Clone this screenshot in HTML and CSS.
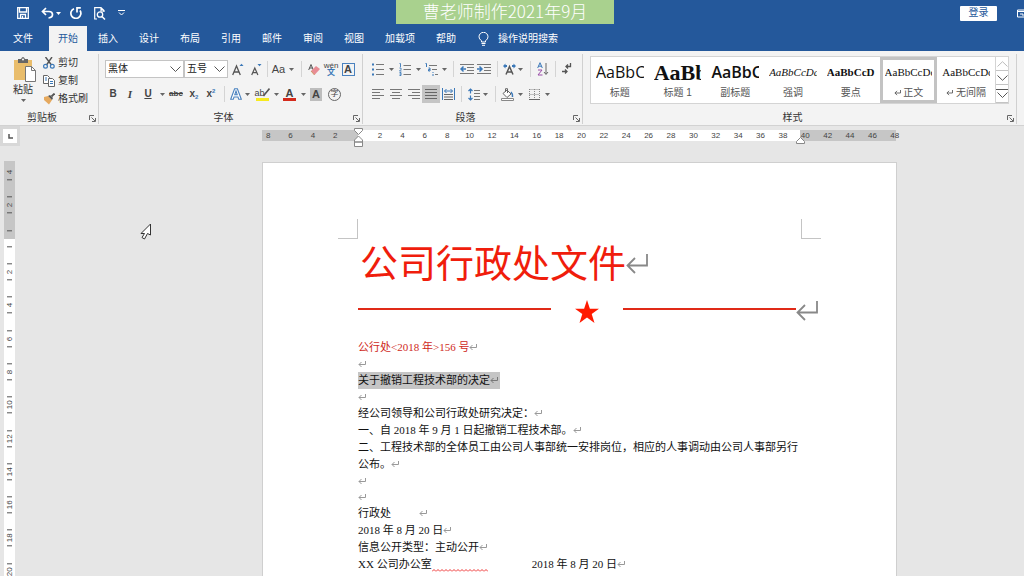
FILE: index.html
```html
<!DOCTYPE html>
<html lang="zh-CN">
<head>
<meta charset="utf-8">
<title>公司行政处文件</title>
<link rel="stylesheet" href="styles.css">
</head>
<body>
<svg class="defs" aria-hidden="true">
  <symbol id="caret" viewBox="0 0 5 3"><path d="M0 0h5L2.500 3z" fill="#666"/></symbol>
  <symbol id="ret" viewBox="0 0 22 20"><path d="M21 0v11.500H2M9 4L1.500 11.500L9 19" fill="none" stroke="currentColor" stroke-width="1.800"/></symbol>
  <symbol id="ret-small" viewBox="0 0 8 7"><path d="M7.500 0v3.500H1M3.500 1L1 3.500L3.500 6" fill="none" stroke="currentColor"/></symbol>
  <symbol id="launch" viewBox="0 0 7 7"><path d="M.5 5V.5H5M2.500 2.500L6 6M6.500 3v3.500H3" fill="none" stroke="#666"/></symbol>
</svg>

<header class="titlebar">
  <div class="quick">
    <button aria-label="保存"><svg width="12" height="12" viewBox="0 0 12 12"><path d="M.7.7h10.600v10.600H.7zM2.500 1v4h7V1M3.500 11V7.500h5V11M5.500 11V9" fill="none" stroke="#fff" stroke-width="1.300"/></svg></button>
    <button aria-label="撤消"><svg width="20" height="12" viewBox="0 0 20 12"><path d="M5 1L1.500 4.500L5 8M2 4.500h6q3.500 0 3.500 3t-4 3.500" fill="none" stroke="#fff" stroke-width="1.700"/><path d="M15 5h5l-2.500 3z" fill="#fff"/></svg></button>
    <button aria-label="重复"><svg width="12" height="12" viewBox="0 0 12 12"><path d="M4 1.700A5 5 0 1 0 10 3.500M10.800 .8H7v4.700" fill="none" stroke="#fff" stroke-width="1.700"/></svg></button>
    <button aria-label="打印预览"><svg width="12" height="13" viewBox="0 0 12 13"><path d="M3 12H.7V.7H7L10 3.500V5M7 .7V4h3" fill="none" stroke="#fff" stroke-width="1.200"/><circle cx="6" cy="7.500" r="2.700" fill="none" stroke="#fff" stroke-width="1.300"/><path d="M8 9.500l3 3" stroke="#fff" stroke-width="1.500"/></svg></button>
    <button aria-label="自定义快速访问工具栏"><svg width="7" height="6" viewBox="0 0 7 6"><path d="M0 .5h7M1 2.500l2.500 2.500L6 2.500" fill="none" stroke="#fff"/></svg></button>
  </div>
  <div class="watermark">曹老师制作2021年9月</div>
  <div class="account">
    <button class="login">登录</button>
    <svg width="7" height="9" viewBox="0 0 7 9"><path d="M8 1H.5v7H8M1 2.500h7M3 5h3v2" fill="none" stroke="#fff"/></svg>
  </div>
</header>

<nav class="tabs">
  <button>文件</button><button class="active">开始</button><button>插入</button><button>设计</button><button>布局</button><button>引用</button><button>邮件</button><button>审阅</button><button>视图</button><button>加载项</button><button>帮助</button>
  <button class="tell"><svg width="11" height="14" viewBox="0 0 11 14"><path d="M3.500 10V8.800Q1 7 1 4.800A4.300 4.300 0 0 1 10 4.800Q10 7 7.500 8.800V10zM3.500 11.500h4M4 13.300h3" fill="none" stroke="#fff"/></svg>操作说明搜索</button>
</nav>

<section class="ribbon">
  <div class="group clipboard">
    <div class="clip-tools">
      <button class="paste"><svg width="23" height="25" viewBox="0 0 23 25"><path d="M1 3h18v20H1z" fill="#e9bd6c"/><path d="M5 2h3q2-4 4 0h3v4H5z" fill="#666"/><circle cx="10" cy="2.500" r="1" fill="#fff"/><path d="M12.500 9.500h6l4 4v11h-10z" fill="#fff" stroke="#777"/><path d="M18.500 9.500v4h4" fill="none" stroke="#777"/></svg><span>粘贴</span><svg class="caret"><use href="#caret"/></svg></button>
      <div class="clip-list">
        <button><svg width="12" height="12" viewBox="0 0 12 12"><path d="M2.500 0L8.500 8M9 0L3.500 8" stroke="#555" stroke-width="1.400"/><circle cx="2.500" cy="9.300" r="1.900" fill="none" stroke="#3b78b8" stroke-width="1.200"/><circle cx="9.300" cy="9.300" r="1.900" fill="none" stroke="#3b78b8" stroke-width="1.200"/></svg>剪切</button>
        <button><svg width="12" height="12" viewBox="0 0 12 12"><path d="M.5.5h4l2 2v6h-6z" fill="#fff" stroke="#666"/><path d="M5.500 3.500h4l2 2v6h-6z" fill="#fff" stroke="#666"/><path d="M2 3h2M2 5h2M7 6.500h3M7 8.500h3" stroke="#3b78b8"/></svg>复制</button>
        <button><svg width="12" height="12" viewBox="0 0 12 12"><path d="M1 4l4-1 4 4-3 4.500L1 7z" fill="#e5a95f"/><path d="M5 3l2-1 3 3-1 2z" fill="#555"/><path d="M8.500 3.500L11.500.5" stroke="#555" stroke-width="1.800"/></svg>格式刷</button>
      </div>
    </div>
    <div class="group-label">剪贴板<button class="launch" aria-label="剪贴板设置"><svg width="7" height="7"><use href="#launch"/></svg></button></div>
  </div>

  <div class="group font">
    <div class="row font-top">
      <select aria-label="字体"><option>黑体</option></select>
      <select aria-label="字号"><option>五号</option></select>
      <i></i>
      <button aria-label="增大字号"><svg width="12" height="13" viewBox="0 0 12 13"><path d="M.7 12L4.500 3L8.300 12M2 9h5" fill="none" stroke="#555" stroke-width="1.300"/><path d="M7.500 3h4L9.500 .7z" fill="#3b78b8"/></svg></button>
      <button aria-label="减小字号"><svg width="12" height="13" viewBox="0 0 12 13"><path d="M1.700 12L4.800 5L7.900 12M2.700 9.700h4" fill="none" stroke="#555" stroke-width="1.200"/><path d="M7.500 1h4L9.500 3.300z" fill="#3b78b8"/></svg></button>
      <hr>
      <button class="aa">Aa</button>
      <svg class="caret"><use href="#caret"/></svg>
      <hr>
      <button aria-label="清除格式"><svg width="12" height="13" viewBox="0 0 12 13"><path d="M.7 7L3 1.500L5.300 7M1.500 5h3" fill="none" stroke="#555"/><path d="M3 8l5-5 4 3-5.500 6z" fill="#e88c94"/><path d="M3 8l3.500 4" stroke="#c96"/></svg></button>
      <button class="pinyin"><span>wén</span><b>文</b></button>
      <button class="boxed">A</button>
    </div>
    <div class="row font-bottom">
      <button><b>B</b></button>
      <button class="ital">I</button>
      <button class="under">U</button>
      <svg class="caret"><use href="#caret"/></svg>
      <button class="strike">abc</button>
      <button class="script">x<sub>2</sub></button>
      <button class="script">x<sup>2</sup></button>
      <hr>
      <button aria-label="文本效果"><svg width="12" height="12" viewBox="0 0 12 12"><path d="M.7 11.300L4.600.7h2.800l3.900 10.600H8.700L8 9H4l-.7 2.300zM4.800 6.700h2.400L6 3z" fill="#fff" stroke="#4a82bf" stroke-width="1.100"/></svg></button>
      <svg class="caret"><use href="#caret"/></svg>
      <button class="mark yellow">ab<svg width="7" height="9" viewBox="0 0 7 9"><path d="M6.500 .5L2 6l-1.500 2" fill="none" stroke="#555" stroke-width="1.600"/></svg></button>
      <svg class="caret"><use href="#caret"/></svg>
      <button class="mark red">A</button>
      <svg class="caret"><use href="#caret"/></svg>
      <button class="shaded">A</button>
      <button class="ring">字</button>
    </div>
    <div class="group-label">字体<button class="launch" aria-label="字体设置"><svg width="7" height="7"><use href="#launch"/></svg></button></div>
  </div>

  <div class="group para">
    <div class="row para-top">
      <button aria-label="项目符号"><svg width="12" height="13" viewBox="0 0 12 13"><path d="M0 1.500h2M0 6.500h2M0 11.500h2" stroke="#3b78b8" stroke-width="2"/><path d="M4 1.500h8M4 6.500h8M4 11.500h8" stroke="#777"/></svg></button>
      <svg class="caret"><use href="#caret"/></svg>
      <button aria-label="编号"><svg width="12" height="13" viewBox="0 0 12 13"><path d="M.5.5h1V4M.5 5h1.500v1.500L.5 8H2.500M.5 9.500H2v3H.5M.5 11H2" fill="none" stroke="#3b78b8" stroke-width=".9"/><path d="M4.500 2.500h7.500M4.500 6.500h7.500M4.500 11.500h7.500" stroke="#777"/></svg></button>
      <svg class="caret"><use href="#caret"/></svg>
      <button aria-label="多级列表"><svg width="14" height="13" viewBox="0 0 14 13"><path d="M.5.5h1V4M3.500 5H5v3H3.500V6.500H5M8 9v1M8 11v2" fill="none" stroke="#3b78b8"/><path d="M4 2.500h8M7 6.500h5M10 11.500h3" stroke="#777"/></svg></button>
      <svg class="caret"><use href="#caret"/></svg>
      <hr>
      <button aria-label="减少缩进"><svg width="14" height="11" viewBox="0 0 14 11"><path d="M0 .5h14M7 3.500h7M7 6.500h7M0 9.500h14" stroke="#777"/><path d="M6 5H1M3.500 2.500L1 5l2.500 2.500" fill="none" stroke="#3b78b8" stroke-width="1.500"/></svg></button>
      <button aria-label="增加缩进"><svg width="14" height="11" viewBox="0 0 14 11"><path d="M0 .5h14M7 3.500h7M7 6.500h7M0 9.500h14" stroke="#777"/><path d="M0 5h5M2.500 2.500L5 5L2.500 7.500" fill="none" stroke="#3b78b8" stroke-width="1.500"/></svg></button>
      <hr>
      <button aria-label="中文版式"><svg width="13" height="12" viewBox="0 0 13 12"><path d="M3 11.500L6.500 3.500L10 11.500M4 9h5" fill="none" stroke="#555" stroke-width="1.500"/><path d="M0 3l2.500-2.500V2H4v2H2.500v1.500zM13 3L10.500.5V2H9v2h1.500v1.500z" fill="#3b78b8"/></svg></button>
      <svg class="caret"><use href="#caret"/></svg>
      <hr>
      <button aria-label="排序"><svg width="12" height="14" viewBox="0 0 12 14"><path d="M.7 6L3 .7L5.300 6M1.500 4.200h3" fill="none" stroke="#3b78b8"/><path d="M1 8h4L1 13h4.500" fill="none" stroke="#9a4ca8"/><path d="M9 1v11M7 10l2 2.500 2-2.500" fill="none" stroke="#666"/></svg></button>
      <hr>
      <button aria-label="显示编辑标记"><svg width="10" height="12" viewBox="0 0 10 12"><path d="M8.500 0v3.500H4M6 1.500L4 3.500l2 2M0 8.500h5M3 6.500l2 2-2 2" fill="none" stroke="#555" stroke-width="1.300"/></svg></button>
    </div>
    <div class="row para-bottom">
      <button aria-label="左对齐"><svg width="12" height="10"><path d="M0 .5h12M0 3.500h8M0 6.500h12M0 9.500h8" stroke="#777"/></svg></button>
      <button aria-label="居中"><svg width="12" height="10"><path d="M0 .5h12M2 3.500h8M0 6.500h12M2 9.500h8" stroke="#777"/></svg></button>
      <button aria-label="右对齐"><svg width="12" height="10"><path d="M0 .5h12M4 3.500h8M0 6.500h12M4 9.500h8" stroke="#777"/></svg></button>
      <button class="on" aria-label="两端对齐"><svg width="12" height="10"><path d="M0 .5h12M0 3.500h12M0 6.500h12M0 9.500h12" stroke="#666"/></svg></button>
      <button aria-label="分散对齐"><svg width="13" height="13" viewBox="0 0 13 13"><path d="M.5 0v12M12.500 0v12M2.500 3h8M4.500 1L2.500 3l2 2M8.500 1l2 2-2 2" fill="none" stroke="#3b78b8"/><path d="M2 6.500h9M2 9h9M2 11.500h9" stroke="#666"/></svg></button>
      <hr>
      <button aria-label="行距"><svg width="12" height="13" viewBox="0 0 12 13"><path d="M2.500 1v4.500M.5 3L2.500 1l2 2M2.500 7.500V12M.5 10l2 2 2-2" fill="none" stroke="#3b78b8" stroke-width="1.200"/><path d="M6 2.500h6M6 5.500h6M6 8.500h6M6 11.500h6" stroke="#777"/></svg></button>
      <svg class="caret"><use href="#caret"/></svg>
      <hr>
      <button aria-label="底纹"><svg width="13" height="13" viewBox="0 0 13 13"><path d="M2 5.500L6 2l4 4-4 3.500zM4.500 4V.7h2V5" fill="#fff" stroke="#666"/><path d="M10 4q2 2 1.500 5" fill="none" stroke="#3b78b8" stroke-width="1.500"/><path d="M.5 10.500h12v2H.5z" fill="#fff" stroke="#888"/></svg></button>
      <svg class="caret"><use href="#caret"/></svg>
      <button aria-label="边框"><svg width="11" height="11"><path d="M.5 .5h10M.5 5.500h10M.5 0v10M5.500 0v10M10.500 0v10" stroke="#888" stroke-dasharray="1 1"/><path d="M0 10.500h11" stroke="#666"/></svg></button>
      <svg class="caret"><use href="#caret"/></svg>
    </div>
    <div class="group-label">段落<button class="launch" aria-label="段落设置"><svg width="7" height="7"><use href="#launch"/></svg></button></div>
  </div>

  <div class="group styles">
    <div class="gallery">
      <button class="style"><span class="sample sans">AaBbC</span><span>标题</span></button>
      <button class="style"><span class="sample big">AaBb</span><span>标题 1</span></button>
      <button class="style"><span class="sample sans medium">AaBbC</span><span>副标题</span></button>
      <button class="style"><span class="sample em">AaBbCcDd</span><span>强调</span></button>
      <button class="style"><span class="sample strong">AaBbCcD</span><span>要点</span></button>
      <button class="style selected"><span class="sample">AaBbCcDd</span><span><svg class="para-mark"><use href="#ret-small"/></svg> 正文</span></button>
      <button class="style"><span class="sample">AaBbCcDd</span><span><svg class="para-mark"><use href="#ret-small"/></svg> 无间隔</span></button>
      <div class="scroll">
        <button aria-label="上一行"><svg width="11" height="6"><path d="M.5 5.500L5.500.7l5 4.800" fill="none" stroke="#bbb"/></svg></button>
        <button aria-label="下一行"><svg width="11" height="6"><path d="M.5 .5L5.500 5.300l5-4.800" fill="none" stroke="#555"/></svg></button>
        <button aria-label="其他"><svg width="13" height="10"><path d="M0 .5h13M1.500 3.500l5 5 5-5" fill="none" stroke="#555"/></svg></button>
      </div>
    </div>
    <div class="group-label">样式<button class="launch" aria-label="样式设置"><svg width="7" height="7"><use href="#launch"/></svg></button></div>
  </div>
</section>

<main class="workspace">
  <aside class="side">
    <button class="tab-stop" aria-label="制表符"><svg width="5" height="5"><path d="M1 0v4h4" fill="none" stroke="#555" stroke-width="1.500"/></svg></button>
    <div class="vruler"><div class="vmarks"><span>4</span><span>2</span><span></span><span>2</span><span>4</span><span>6</span><span>8</span><span>10</span><span>12</span><span>14</span><span>16</span><span>18</span><span>20</span></div></div>
  </aside>
  <div class="canvas">
    <div class="hruler">
      <div class="hmarks"><span>8</span><span>6</span><span>4</span><span>2</span><span></span><span>2</span><span>4</span><span>6</span><span>8</span><span>10</span><span>12</span><span>14</span><span>16</span><span>18</span><span>20</span><span>22</span><span>24</span><span>26</span><span>28</span><span>30</span><span>32</span><span>34</span><span>36</span><span>38</span><span>40</span><span>42</span><span>44</span><span>46</span><span>48</span></div>
      <svg class="indent left" width="9" height="20" viewBox="0 0 9 20"><path d="M.5.5h8v2l-4 4-4-4zM.5 14v-2l4-4 4 4v2zM.5 14h8v4.500h-8z" fill="#fff" stroke="#888"/></svg>
      <svg class="indent right" width="9" height="7" viewBox="0 0 9 7"><path d="M.5 6.500v-2l4-4 4 4v2z" fill="#fff" stroke="#888"/></svg>
    </div>
    <article class="page">
      <div class="corners"><i></i><i></i></div>
      <h1>公司行政处文件<svg class="big-mark"><use href="#ret"/></svg></h1>
      <div class="rule">
        <hr>
        <svg width="24" height="23" viewBox="0 0 24 23"><path d="M12 0l2.900 8.700H24l-7.300 5.400L19.500 23 12 17.500 4.500 23l2.800-8.900L0 8.700h9.100z" fill="#ff1a00"/></svg>
        <hr>
        <svg class="big-mark"><use href="#ret"/></svg>
      </div>
      <div class="text">
        <p class="number">公行处&lt;2018 年&gt;156 号<svg class="mk"><use href="#ret-small"/></svg></p>
        <p class="blank"><svg class="mk"><use href="#ret-small"/></svg></p>
        <p><mark>关于撤销工程技术部的决定<svg class="mk"><use href="#ret-small"/></svg></mark></p>
        <p class="blank"><svg class="mk"><use href="#ret-small"/></svg></p>
        <p>经公司领导和公司行政处研究决定：<svg class="mk"><use href="#ret-small"/></svg></p>
        <p>一、自 2018 年 9 月 1 日起撤销工程技术部。<svg class="mk"><use href="#ret-small"/></svg></p>
        <p>二、工程技术部的全体员工由公司人事部统一安排岗位，相应的人事调动由公司人事部另行公布。<svg class="mk"><use href="#ret-small"/></svg></p>
        <p class="blank"><svg class="mk"><use href="#ret-small"/></svg></p>
        <p class="blank"><svg class="mk"><use href="#ret-small"/></svg></p>
        <p class="spread">行政处<svg class="mk"><use href="#ret-small"/></svg></p>
        <p>2018 年 8 月 20 日<svg class="mk"><use href="#ret-small"/></svg></p>
        <p>信息公开类型：主动公开<svg class="mk"><use href="#ret-small"/></svg></p>
        <p class="signature"><span>XX 公司办公室</span><span class="squiggle"></span><span>2018 年 8 月 20 日<svg class="mk"><use href="#ret-small"/></svg></span></p>
      </div>
    </article>
  </div>
  <svg class="pointer" width="12" height="18" viewBox="0 0 12 18"><path d="M10.500 1v11l-3-1.500-3 5.500-2.500-1.500 2.500-4H1z" fill="#fff" stroke="#333"/></svg>
</main>
</body>
</html>
```

FILE: styles.css
```css
* { box-sizing: border-box; }
body {
  margin: 0;
  height: 100vh;
  overflow: hidden;
  display: flex;
  flex-direction: column;
  background: #e6e6e6;
  color: #333;
  font: 10px/14px "Liberation Sans", "Noto Sans CJK SC", sans-serif;
}
button {
  border: 0;
  padding: 0;
  background: none;
  color: inherit;
  font: inherit;
  white-space: nowrap;
}
svg { display: block; flex: none; }
.defs { position: absolute; width: 0; height: 0; }
.caret { width: 5px; height: 3px; }

/* Title bar */
.titlebar {
  position: relative;
  height: 26px;
  background: #24589b;
  display: flex;
  justify-content: space-between;
  align-items: center;
}
.quick { display: flex; align-items: center; gap: 12px; padding-left: 17px; }
.quick button:nth-child(2) { margin-right: -3px; }
.watermark {
  position: absolute;
  left: 396px;
  top: 0;
  width: 218px;
  height: 24px;
  background: #a9d18e;
  color: #fff;
  font-family: "Noto Sans CJK SC", sans-serif;
  font-size: 17px;
  font-weight: 300;
  line-height: 22px;
  text-align: center;
}
.account { display: flex; align-items: center; gap: 20px; }
.login { width: 37px; height: 15px; background: #fff; color: #24589b; border-radius: 1px; }

/* Tabs */
.tabs { height: 25px; background: #24589b; color: #fff; display: flex; gap: 1px; padding: 0 0 0 3px; }
.tabs button { padding: 0 10px; }
.tabs .active { background: #f3f3f3; color: #24589b; margin: 0 0 0 5px; }
.tabs .active { padding: 0 9px; }
.tabs .tell { display: flex; align-items: center; gap: 9px; padding-left: 11px; }

/* Ribbon */
.ribbon {
  height: 75px;
  background: #f3f3f3;
  border-bottom: 1px solid #d2d2d2;
  display: flex;
  padding-right: 7px;
}
.group {
  flex: none;
  margin: 3px 0 1px;
  border-right: 1px solid #d0d0d0;
  display: flex;
  flex-direction: column;
}
.clipboard { width: 99px; }
.font { width: 264px; }
.para { width: 220px; }
.styles { flex: 1; }
.group-label { position: relative; margin-top: auto; height: 13px; line-height: 13px; padding-right: 14px; text-align: center; }
.launch { position: absolute; right: 2px; bottom: 2px; }
.clip-tools { display: flex; gap: 7px; padding-left: 13px; }
.paste { display: flex; flex-direction: column; align-items: flex-start; padding-top: 3px; }
.paste span { line-height: 15px; }
.paste .caret { margin: 2px 8px; }
.clip-list { display: flex; flex-direction: column; }
.clip-list button { height: 18px; display: flex; align-items: center; gap: 3px; }
.row { display: grid; height: 18px; align-items: center; justify-items: center; margin-top: 6px; }
.row + .row { margin-top: 7px; }
.row button { display: flex; align-items: center; justify-content: center; color: #444; }
.row hr, .row i { margin: 0; }
.row hr { border: 0; width: 1px; height: 16px; background: #d4d4d4; }
.font .row { margin-left: 6px; }
.para .row { margin-left: 6px; }
.font-top { grid-template-columns: 79px 44px 1px 18px 17px 6px 17px 9px 10px 16px 18px 16px; }
.font-bottom { grid-template-columns: 16px 18px 18px 10px 18px 18px 16px 10px 14px 9px 20px 8px 19px 8px 18px 19px; }
.para-top { grid-template-columns: 18px 8px 20px 7px 19px 7px 11px 16px 18px 9px 14px 9px 10px 16px 8px 16px; }
.para-bottom { grid-template-columns: 18px 18px 17px 18px 17px 9px 15px 8px 12px 13px 12px 16px 10px; }
.row select {
  appearance: none;
  width: 100%;
  height: 18px;
  border: 1px solid #c4c4c4;
  border-radius: 0;
  padding: 0 2px;
  color: #222;
  font: inherit;
  background: #fff url("data:image/svg+xml,%3Csvg xmlns='http://www.w3.org/2000/svg' width='11' height='7'%3E%3Cpath d='M.5.5l5 5 5-5' fill='none' stroke='%23555'/%3E%3C/svg%3E") no-repeat right 2px center;
}
.row .aa { font-size: 11px; }
.row .pinyin { flex-direction: column; font-size: 8px; line-height: 7px; }
.pinyin b { color: #3b78b8; }
.row .boxed { width: 13px; height: 13px; border: 1px solid #4a82bf; font-size: 11px; font-weight: bold; line-height: 11px; }
.row .ital { font: italic bold 11px "Liberation Serif", serif; }
.row .under { font-weight: bold; text-decoration: underline; }
.row .strike { font-size: 8px; font-weight: bold; text-decoration: line-through; }
.row .script { font-size: 10px; font-weight: bold; }
.script sub, .script sup { font-size: 6px; line-height: 6px; color: #3b78b8; }
.script sub { padding-top: 6px; }
.script sup { padding-bottom: 6px; }
.row .mark { width: 13px; height: 14px; font-size: 9px; line-height: 10px; border-bottom: 3px solid; }
.row .yellow { border-color: #f7ea1e; }
.yellow svg { margin-left: -2px; }
.row .red { border-color: #d42a1c; font-size: 11px; font-weight: bold; }
.row .shaded { width: 12px; height: 13px; background: #bdbdbd; font-size: 11px; font-weight: bold; }
.row .ring { width: 13px; height: 13px; border: 1px solid #666; border-radius: 50%; font-size: 8px; }
.row .on { width: 18px; height: 18px; background: #c5c5c5; }

/* Style gallery */
.gallery {
  margin: 2px 7px 0;
  height: 48px;
  background: #fff;
  border: 1px solid #d4d4d4;
  display: grid;
  grid-template-columns: repeat(7, 1fr) 13px;
}
.style {
  min-width: 0;
  padding: 0 2px;
  border: 3px solid transparent;
  display: flex;
  flex-direction: column;
  align-items: stretch;
  justify-content: space-between;
  color: #555;
}
.style span { line-height: 14px; }
.style .sample {
  height: 25px;
  line-height: 25px;
  overflow: hidden;
  text-align: left;
  color: #111;
  font-family: "Liberation Serif", serif;
  font-size: 11px;
}
.style .sans { font-family: "Open Sans", sans-serif; font-size: 16px; }
.style .medium { font-weight: 600; }
.style .big { font-size: 22px; font-weight: bold; }
.style .em { font-style: italic; }
.style .strong { font-weight: bold; }
.selected { border-color: #c3c3c3; }
.para-mark { display: inline-block; width: 7px; height: 6px; color: #555; }
.scroll { display: grid; border-left: 1px solid #d4d4d4; }
.scroll button { display: grid; place-items: center; border-bottom: 1px solid #c4c4c4; overflow: hidden; }

/* Workspace */
.workspace { position: relative; flex: 1; min-height: 0; display: flex; }
.side { width: 20px; display: flex; flex-direction: column; gap: 15px; }
.tab-stop { width: 20px; height: 20px; border: 3px solid #d8d8d8; background: #fff; display: grid; place-items: center; flex: none; }
.vruler {
  flex: 1;
  min-height: 0;
  width: 11px;
  margin-left: 4px;
  overflow: hidden;
  background: linear-gradient(#c6c6c6 78px, #fff 78px);
}
.vmarks { height: 433px; margin-top: -6px; display: flex; flex-direction: column; }
.vmarks span {
  flex: 1;
  display: flex;
  align-items: center;
  justify-content: space-between;
  padding: 8px 0;
  writing-mode: vertical-rl;
  transform: rotate(180deg);
  font-size: 8px;
  line-height: 11px;
  color: #444;
}
.vmarks span::before, .vmarks span::after { content: ""; width: 5px; height: 1px; background: #555; }
.vmarks span:first-child::after { visibility: hidden; }
.canvas { flex: 1; min-width: 0; padding: 4px 0 0 242px; overflow: hidden; display: flex; flex-direction: column; }
.hruler {
  position: relative;
  flex: none;
  width: 634px;
  height: 11px;
  background: linear-gradient(90deg, #c6c6c6 96px, #fff 96px 538px, #c6c6c6 538px);
}
.hmarks { display: grid; grid-template-columns: repeat(29, 1fr); margin: 0 -10px 0 -5px; text-align: center; font-size: 8px; line-height: 11px; color: #444; }
.indent { position: absolute; }
.indent.left { left: 92px; top: -2px; }
.indent.right { left: 534px; top: 7px; }

/* Paper */
.page {
  flex: 1;
  width: 635px;
  margin-top: 21px;
  padding: 56px 75px 0;
  background: #fff;
  border: 1px solid #cfcfcf;
  border-bottom: 0;
}
.corners { display: flex; justify-content: space-between; }
.corners i { width: 20px; height: 20px; border: solid #c4c4c4; border-width: 0 1px 1px 0; }
.corners i:last-child { border-width: 0 0 1px 1px; }
.page h1 { margin: 0 22px; display: flex; align-items: center; color: #f01d0c; font-size: 38px; font-weight: 400; line-height: 50px; }
.big-mark { width: 22px; height: 20px; color: #888; }
.rule { display: flex; align-items: center; margin: 10px 0 0 20px; height: 24px; }
.rule hr { margin: 0 0 4px; border: 0; height: 2px; background: #e02a18; flex: 193 1 0; }
.rule hr + svg { margin: 0 24px; }
.rule svg + hr { flex-grow: 173; }
.rule hr + .big-mark { margin: 0 3px 0 0; }
.text { margin: 16px 17px 0 20px; color: #111; font: 11px/17px "Liberation Serif", "Noto Sans CJK SC", serif; }
.text p { margin: 0; }
.text .blank { height: 16px; line-height: 16px; }
.text .number { color: #cf2a1c; }
.mk { display: inline-block; width: 8px; height: 7px; color: #999; }
.text mark { display: inline-block; background: #c5c5c5; color: #111; padding-right: 2px; }
mark .mk { color: #777; }
.spread .mk { margin-left: 28px; }
.signature { display: flex; }
.squiggle {
  width: 56px;
  margin-right: 44px;
  background: url("data:image/svg+xml,%3Csvg xmlns='http://www.w3.org/2000/svg' width='4' height='3'%3E%3Cpath d='M0 2.500l2-2 2 2' fill='none' stroke='%23e33'/%3E%3C/svg%3E") repeat-x left bottom 1px;
}
.pointer { position: absolute; left: 140px; top: 97px; }
```
